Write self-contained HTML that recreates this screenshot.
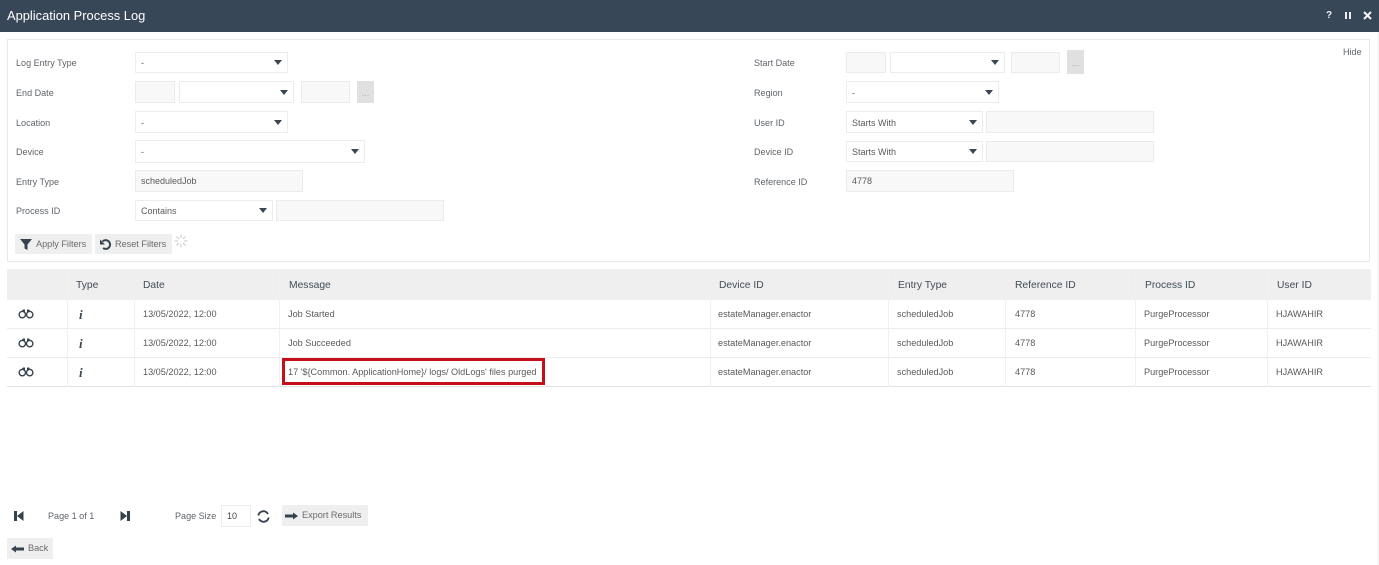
<!DOCTYPE html>
<html><head><meta charset="utf-8"><style>
html,body{margin:0;padding:0;width:1379px;height:565px;overflow:hidden;background:#fff}
body{position:relative;font-family:"Liberation Sans",sans-serif;font-size:9px;color:#555}
div,span.a,svg{position:absolute;box-sizing:border-box}
.t{white-space:nowrap;line-height:12px}
.l{font-size:9.05px;color:#5f646a;white-space:nowrap;line-height:12px}
.s{background:#fff;border:1px solid #ececec;font-size:9px;color:#5a5a5a;padding-left:5px;white-space:nowrap}
.s:after{content:"";position:absolute;right:5px;top:50%;margin-top:-2.5px;border:4.5px solid transparent;border-top:5.5px solid #3c4650;border-bottom:0}
.i{background:#f8f8f8;border:1px solid #ebebeb;font-size:9px;color:#5a5a5a;padding-left:5px;white-space:nowrap}
.b{background:#efefef;color:#6a6a6a;font-size:9.15px;white-space:nowrap;line-height:20px}
.h{top:269px;height:31px;font-size:10.3px;line-height:33px;color:#414c57;white-space:nowrap}
.c{font-size:9.15px;color:#5a5a5a;white-space:nowrap;line-height:13px}
.r{left:7px;width:1364px;height:1px;background:#ececec}
.v{width:1px;background:#f1f1f1;top:269px;height:118px}
</style></head><body>
<div style="left:0;top:0;width:1379px;height:32px;background:#374757"></div>
<div class="t" style="left:7px;top:8px;font-size:12.9px;color:#fff;line-height:15px">Application Process Log</div>
<div class="t" style="left:1326px;top:10px;font-size:10px;font-weight:bold;color:#f2f2f2">?</div>
<div style="left:1345px;top:12px;width:2px;height:7px;background:#eee"></div>
<div style="left:1349px;top:12px;width:2px;height:7px;background:#eee"></div>
<svg style="left:1363px;top:11px" width="9" height="9" viewBox="0 0 9 9"><path d="M1 1l7 7M8 1l-7 7" stroke="#f5f5f5" stroke-width="2"/></svg>
<div style="left:1377px;top:32px;width:2px;height:533px;background:#f6f6f6"></div>

<div style="left:7px;top:39px;width:1363px;height:223px;border:1px solid #e9e9e9;background:#fff"></div>
<div class="l" style="left:1343px;top:46px">Hide</div>

<div class="l" style="left:16px;top:57px">Log Entry Type</div>
<div class="s" style="left:135px;top:52px;width:153px;height:21px;line-height:20px">-</div>
<div class="l" style="left:16px;top:87px">End Date</div>
<div class="i" style="left:135px;top:81px;width:40px;height:22px"></div>
<div class="s" style="left:179px;top:81px;width:115px;height:22px"></div>
<div class="i" style="left:301px;top:81px;width:49px;height:22px"></div>
<div class="b" style="left:357px;top:81px;width:17px;height:22px;background:#e0e0e0;text-align:center;line-height:24px;color:#aaa">...</div>
<div class="l" style="left:16px;top:117px">Location</div>
<div class="s" style="left:135px;top:111px;width:153px;height:22px;line-height:22px">-</div>
<div class="l" style="left:16px;top:146px">Device</div>
<div class="s" style="left:135px;top:140px;width:230px;height:23px;line-height:22px">-</div>
<div class="l" style="left:16px;top:176px">Entry Type</div>
<div class="i" style="left:135px;top:170px;width:168px;height:22px;line-height:20px">scheduledJob</div>
<div class="l" style="left:16px;top:205px">Process ID</div>
<div class="s" style="left:135px;top:200px;width:138px;height:21px;line-height:20px">Contains</div>
<div class="i" style="left:276px;top:200px;width:168px;height:21px"></div>

<div class="b" style="left:15px;top:234px;width:77px;height:20px;padding-left:21px">Apply Filters</div>
<svg style="left:20px;top:238px" width="12" height="13" viewBox="0 0 12 13"><path d="M0 1h12L7.5 6.5V12L4.5 10.5V6.5z" fill="#36424e"/></svg>
<div class="b" style="left:95px;top:234px;width:77px;height:20px;padding-left:20px">Reset Filters</div>
<svg style="left:99px;top:238px" width="13" height="13" viewBox="0 0 13 13"><path d="M3.5 3.5A4.4 4.4 0 1 1 4 10" fill="none" stroke="#36424e" stroke-width="2"/><path d="M1 1.5v5h5z" fill="#36424e"/></svg>
<svg style="left:174px;top:234px" width="14" height="14" viewBox="0 0 14 14"><g stroke="#d0d0d0" stroke-width="1.2" stroke-linecap="round"><path d="M7 1v2.5M7 10.5V13M1 7h2.5M10.5 7H13M2.8 2.8l1.8 1.8M9.4 9.4l1.8 1.8M2.8 11.2l1.8-1.8M9.4 4.6l1.8-1.8"/></g></svg>

<div class="l" style="left:754px;top:57px">Start Date</div>
<div class="i" style="left:846px;top:52px;width:40px;height:21px"></div>
<div class="s" style="left:890px;top:52px;width:115px;height:21px"></div>
<div class="i" style="left:1011px;top:52px;width:49px;height:21px"></div>
<div class="b" style="left:1067px;top:50px;width:17px;height:24px;background:#e0e0e0;text-align:center;line-height:26px;color:#aaa">...</div>
<div class="l" style="left:754px;top:87px">Region</div>
<div class="s" style="left:846px;top:81px;width:153px;height:22px;line-height:22px">-</div>
<div class="l" style="left:754px;top:117px">User ID</div>
<div class="s" style="left:846px;top:111px;width:137px;height:22px;line-height:22px">Starts With</div>
<div class="i" style="left:986px;top:111px;width:168px;height:22px"></div>
<div class="l" style="left:754px;top:146px">Device ID</div>
<div class="s" style="left:846px;top:141px;width:137px;height:21px;line-height:20px">Starts With</div>
<div class="i" style="left:986px;top:141px;width:168px;height:21px"></div>
<div class="l" style="left:754px;top:176px">Reference ID</div>
<div class="i" style="left:846px;top:170px;width:168px;height:22px;line-height:20px">4778</div>

<div style="left:7px;top:269px;width:1364px;height:31px;background:#efefef"></div>
<div class="r" style="top:328px"></div><div class="r" style="top:357px"></div><div class="r" style="top:386px;background:#e2e2e2"></div>
<div class="v" style="left:67px"></div><div class="v" style="left:134px"></div><div class="v" style="left:279px"></div><div class="v" style="left:710px"></div><div class="v" style="left:888px"></div><div class="v" style="left:1005px"></div><div class="v" style="left:1135px"></div><div class="v" style="left:1267px"></div>

<div class="h" style="left:76px">Type</div><div class="h" style="left:143px">Date</div><div class="h" style="left:289px">Message</div><div class="h" style="left:719px">Device ID</div><div class="h" style="left:898px">Entry Type</div><div class="h" style="left:1015px">Reference ID</div><div class="h" style="left:1145px">Process ID</div><div class="h" style="left:1277px">User ID</div>

<svg width="0" height="0" style="left:0;top:0"><defs><g id="bin"><path d="M3 3L5 .5H7V3H9V.5H11L13 3Z" fill="#36424e"/><circle cx="4.3" cy="5.6" r="3.2" fill="#fff" stroke="#36424e" stroke-width="1.4"/><circle cx="11.7" cy="5.6" r="3.2" fill="#fff" stroke="#36424e" stroke-width="1.4"/></g></defs></svg>

<svg style="left:18px;top:309px" width="16" height="10"><use href="#bin"/></svg>
<div class="t" style="left:79px;top:307px;font:italic bold 13px/15px 'Liberation Serif',serif;color:#3c4650">i</div>
<div class="c" style="left:143px;top:308px">13/05/2022, 12:00</div>
<div class="c" style="left:288px;top:308px">Job Started</div>
<div class="c" style="left:718px;top:308px">estateManager.enactor</div><div class="c" style="left:897px;top:308px">scheduledJob</div><div class="c" style="left:1015px;top:308px">4778</div><div class="c" style="left:1144px;top:308px">PurgeProcessor</div><div class="c" style="left:1276px;top:308px">HJAWAHIR</div>

<svg style="left:18px;top:338px" width="16" height="10"><use href="#bin"/></svg>
<div class="t" style="left:79px;top:336px;font:italic bold 13px/15px 'Liberation Serif',serif;color:#3c4650">i</div>
<div class="c" style="left:143px;top:337px">13/05/2022, 12:00</div>
<div class="c" style="left:288px;top:337px">Job Succeeded</div>
<div class="c" style="left:718px;top:337px">estateManager.enactor</div><div class="c" style="left:897px;top:337px">scheduledJob</div><div class="c" style="left:1015px;top:337px">4778</div><div class="c" style="left:1144px;top:337px">PurgeProcessor</div><div class="c" style="left:1276px;top:337px">HJAWAHIR</div>

<svg style="left:18px;top:367px" width="16" height="10"><use href="#bin"/></svg>
<div class="t" style="left:79px;top:365px;font:italic bold 13px/15px 'Liberation Serif',serif;color:#3c4650">i</div>
<div class="c" style="left:143px;top:366px">13/05/2022, 12:00</div>
<div class="c" style="left:288px;top:366px">17 '${Common. ApplicationHome}/ logs/ OldLogs' files purged</div>
<div class="c" style="left:718px;top:366px">estateManager.enactor</div><div class="c" style="left:897px;top:366px">scheduledJob</div><div class="c" style="left:1015px;top:366px">4778</div><div class="c" style="left:1144px;top:366px">PurgeProcessor</div><div class="c" style="left:1276px;top:366px">HJAWAHIR</div>
<div style="left:282px;top:358px;width:263px;height:27px;border:3px solid #c4101a"></div>

<svg style="left:13px;top:510px" width="11" height="12" viewBox="0 0 11 12"><path d="M1 1h3v10H1zM10.5 1v10L4 6z" fill="#36424e"/></svg>
<div class="l" style="left:48px;top:510px">Page 1 of 1</div>
<svg style="left:120px;top:510px" width="11" height="12" viewBox="0 0 11 12"><path d="M7 1h3v10H7zM.5 1v10L7 6z" fill="#36424e"/></svg>
<div class="l" style="left:175px;top:510px">Page Size</div>
<div class="i" style="left:221px;top:505px;width:30px;height:22px;background:#fff;line-height:20px;color:#444">10</div>
<svg style="left:257px;top:510px" width="13" height="13" viewBox="0 0 13 13"><path d="M1.3 5.5A5.2 5.2 0 0 1 11 4M11.7 7.5A5.2 5.2 0 0 1 2 9" fill="none" stroke="#36424e" stroke-width="1.9"/></svg>
<div class="b" style="left:282px;top:505px;width:86px;height:21px;padding-left:20px;line-height:20px">Export Results</div>
<svg style="left:285px;top:512px" width="13" height="8" viewBox="0 0 13 8"><path d="M0 2.5h8V0.5l5 3.5-5 3.5V5.5H0z" fill="#36424e"/></svg>
<div class="b" style="left:7px;top:538px;width:46px;height:21px;padding-left:21px;line-height:20px">Back</div>
<svg style="left:11px;top:545px" width="13" height="8" viewBox="0 0 13 8"><path d="M13 2.5H5V0.5L0 4l5 3.5V5.5h8z" fill="#36424e"/></svg>
</body></html>
